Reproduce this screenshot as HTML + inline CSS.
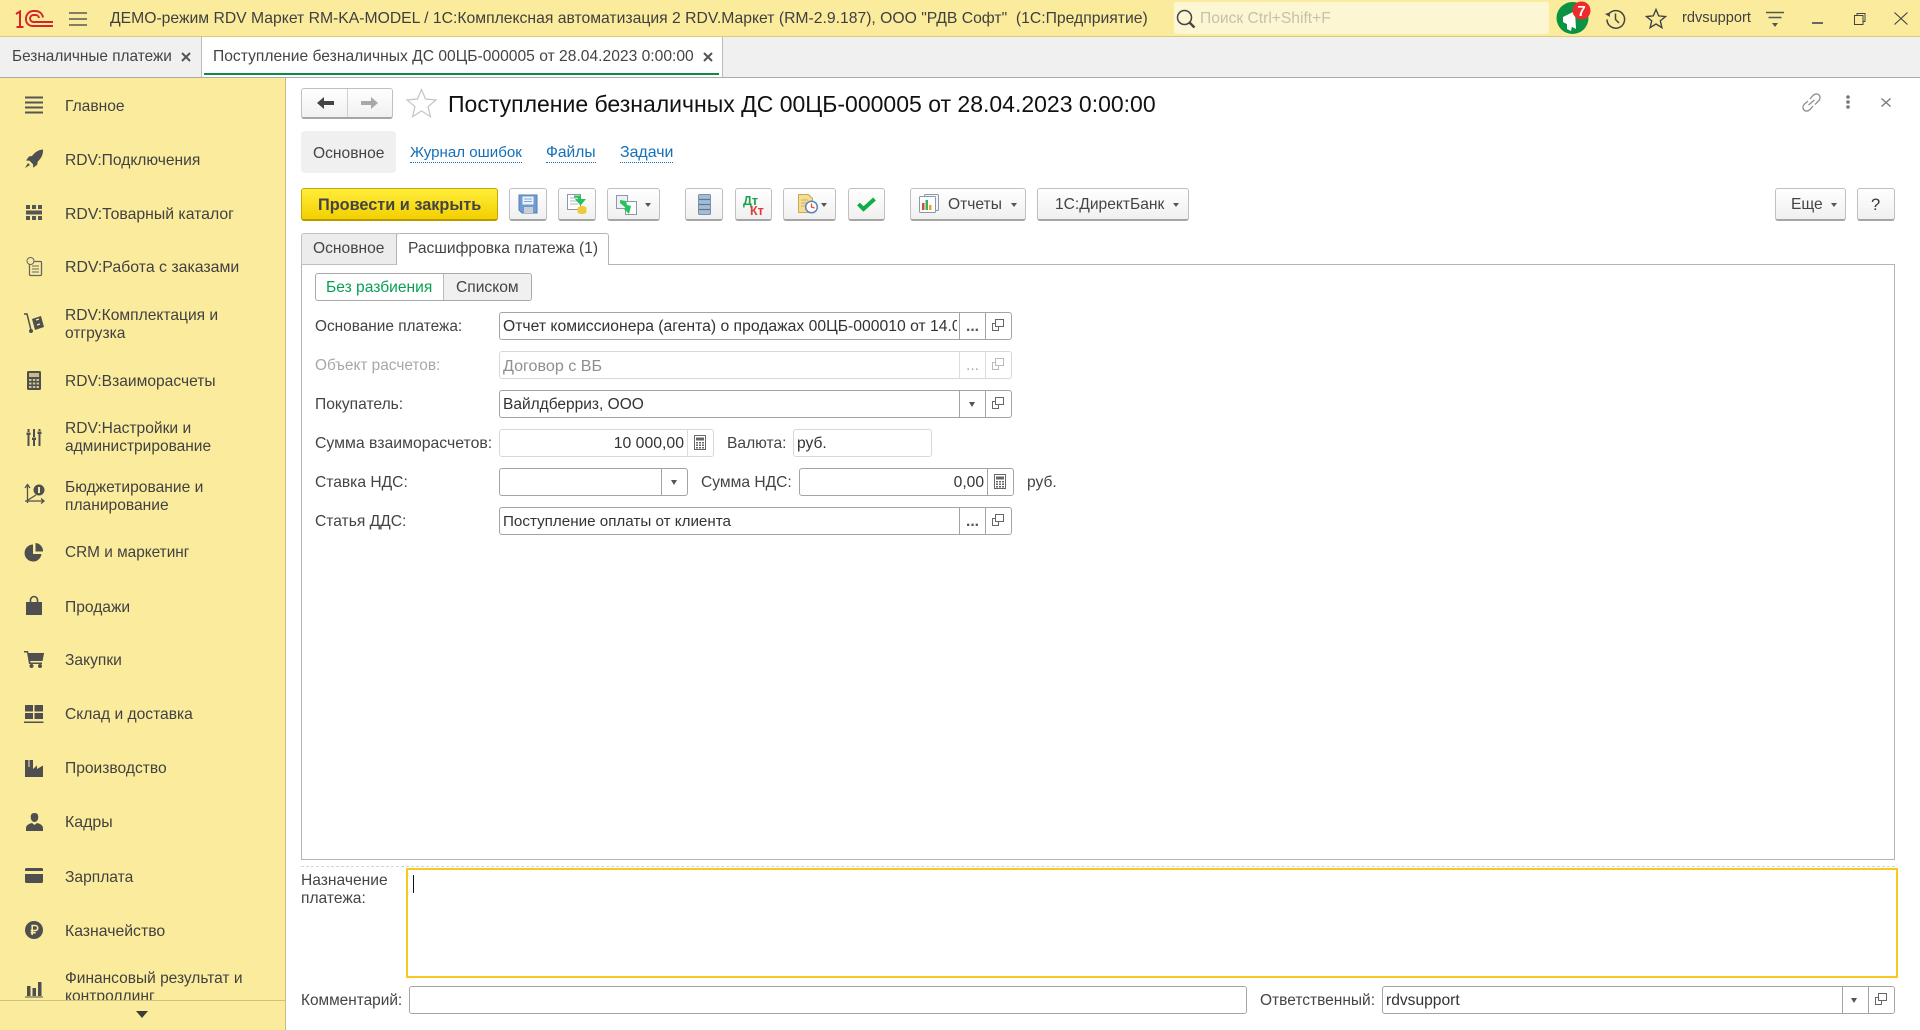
<!DOCTYPE html>
<html lang="ru"><head><meta charset="utf-8"><title>Поступление безналичных ДС</title>
<style>
html,body{margin:0;padding:0;width:1920px;height:1030px;overflow:hidden;background:#fff}
body{position:relative;font-family:"Liberation Sans",Arial,sans-serif;font-size:15.6px;color:#444}
.a{position:absolute}
.t{position:absolute;white-space:nowrap;line-height:20px;height:20px;margin-top:1px}
.b{position:absolute;top:188px;height:33px;box-sizing:border-box;border:1px solid #c0c0c0;border-bottom:2px solid #a5a5a5;border-radius:3px;background:linear-gradient(#fff,#f0f0f0)}
.f{position:absolute;box-sizing:border-box;height:28px;border:1px solid #a4a4a4;border-radius:3px;background:#fff}
.g{border-color:#d8d8d8}
.d{position:absolute;width:1px;top:313px;height:26px;background:#a4a4a4}
svg{position:absolute;overflow:visible}
.m{color:#414141}
.l{color:#1470b8;border-bottom:1px dotted #1470b8;height:18px;line-height:18px}
</style></head><body>
<svg width="0" height="0" style="position:absolute"><defs>
<symbol id="cp" viewBox="0 0 14 14"><path d="M4.500 1.500h8v7h-8zM4.500 5.500H1.500v7h6v-4" fill="none" stroke="#666" stroke-width="1"/></symbol>
<symbol id="cp2" viewBox="0 0 14 14"><path d="M4.500 1.500h8v7h-8zM4.500 5.500H1.500v7h6v-4" fill="none" stroke="#bbb" stroke-width="1"/></symbol>
<symbol id="calc" viewBox="0 0 14 16"><rect x="1.500" y=".5" width="11" height="14" fill="#fff" stroke="#666"/><rect x="3" y="2.500" width="8" height="3" fill="#666"/><path d="M3 7h2v1.500H3zM6 7h2v1.500H6zM9 7h2v1.500H9zM3 9.500h2V11H3zM6 9.500h2V11H6zM9 9.500h2V11H9zM3 12h2v1.500H3zM6 12h2v1.500H6zM9 12h2v1.500H9z" fill="#666"/></symbol>
</defs></svg>

<!-- title bar -->
<div class="a" style="left:0;top:0;width:1920px;height:37px;background:#fbec9d;border-bottom:1px solid #d9ca7e;box-sizing:border-box"></div>
<svg style="left:15px;top:9px" width="38" height="19" viewBox="0 0 38 19"><path d="M1 5l4-2.500V18M1.500 18h7" fill="none" stroke="#d8232a" stroke-width="2"/><path d="M11 9.500a7.500 7.500 0 0 1 7.500-7.500h2a7.500 7.500 0 0 1 7.500 6.500M11 9.500v1a6.500 6.500 0 0 0 6.500 6.500H38M15 9.500a3.500 3.500 0 0 1 3.500-3.500h2a3.500 3.500 0 0 1 3.500 3M15 9.500v0a3.500 3.500 0 0 0 3.500 3.500H38" fill="none" stroke="#d8232a" stroke-width="1.900"/></svg>
<svg style="left:69px;top:12px" width="20" height="15"><path d="M0 1h18M0 7h18M0 13h18" stroke="#5a5a50" stroke-width="1.400"/></svg>
<div class="t" style="left:110px;top:8px;color:#3f3f3f;font-size:15.73px">ДЕМО-режим RDV Маркет RM-KA-MODEL / 1С:Комплексная автоматизация 2 RDV.Маркет (RM-2.9.187), ООО "РДВ Софт"&nbsp; (1С:Предприятие)</div>
<div class="a" style="left:1174px;top:2px;width:375px;height:32px;background:#fdf6d3;border-radius:3px"></div>
<svg style="left:1176px;top:9px" width="21" height="20"><circle cx="8.500" cy="8.500" r="7" fill="none" stroke="#444" stroke-width="1.500"/><path d="M13.500 13.500l5 5" stroke="#444" stroke-width="2.400"/></svg>
<div class="t" style="left:1200px;top:8px;color:#c4c1ad;font-size:15.6px">Поиск Ctrl+Shift+F</div>
<svg style="left:1556px;top:1px" width="36" height="34"><circle cx="16.500" cy="17" r="16" fill="#0a9345"/><path d="M7 16L19 10l1 18L7 21zM11 23l5 2-1 5-4-2z" fill="#fff"/><circle cx="25.500" cy="9.500" r="9" fill="#ee2a2a"/><text x="25.500" y="15" text-anchor="middle" font-family="Liberation Sans" font-weight="bold" font-size="15" fill="#fff">7</text></svg>
<svg style="left:1605px;top:9px" width="21" height="20"><path d="M3.200 6A8.800 8.800 0 1 1 2 10.500" fill="none" stroke="#444" stroke-width="1.500"/><path d="M0 5l4.500-1.500L5 8z" fill="#444"/><path d="M10.500 4.500v6l3.500 3.500" fill="none" stroke="#444" stroke-width="1.500"/></svg>
<svg style="left:1645px;top:8px" width="22" height="21"><path d="M11 1.500l2.700 6.400 6.800.6-5.200 4.400 1.600 6.700L11 16l-5.900 3.600 1.600-6.700L1.500 8.500l6.800-.6z" fill="none" stroke="#444" stroke-width="1.400"/></svg>
<div class="t" style="left:1682px;top:7px;color:#3f3f3f;font-size:14.600px">rdvsupport</div>
<svg style="left:1766px;top:11px" width="19" height="17"><path d="M0 1.500h18M2.500 6.500h13" stroke="#555" stroke-width="1.400"/><path d="M6 12h6l-3 4z" fill="#555"/></svg>
<div class="a" style="left:1812px;top:22px;width:11px;height:2px;background:#666"></div>
<svg style="left:1854px;top:13px" width="12" height="12"><path d="M3 2.500V.5h8v8H9M.5 2.500h8.500v9H.5z" fill="none" stroke="#444" stroke-width="1"/></svg>
<svg style="left:1894px;top:12px" width="14" height="13"><path d="M.5.5l13 12M13.500.5l-13 12" stroke="#444" stroke-width="1.100"/></svg>

<!-- open tabs -->
<div class="a" style="left:0;top:37px;width:1920px;height:41px;background:#f0f0f0;border-bottom:1px solid #aaa;box-sizing:border-box"></div>
<div class="t" style="left:12px;top:46px;font-size:15.37px">Безналичные платежи</div>
<svg style="left:181px;top:52px" width="10" height="10"><path d="M1 1l8 8M9 1l-8 8" stroke="#555" stroke-width="2"/></svg>
<div class="a" style="left:201px;top:37px;width:522px;height:41px;box-sizing:border-box;background:#fff;border-left:1px solid #bbb;border-right:1px solid #bbb;border-bottom:1px solid #aaa"></div>
<div class="a" style="left:204px;top:73px;width:515px;height:2px;background:#0c8a46"></div>
<div class="t" style="left:213px;top:46px;font-size:15.63px">Поступление безналичных ДС 00ЦБ-000005 от 28.04.2023 0:00:00</div>
<svg style="left:703px;top:52px" width="10" height="10"><path d="M1 1l8 8M9 1l-8 8" stroke="#555" stroke-width="2"/></svg>

<!-- sidebar -->
<div class="a" style="left:0;top:78px;width:286px;height:952px;background:#fbec9d;border-right:1px solid #c9bc7c;box-sizing:border-box;overflow:hidden">
<div class="t m" style="left:65px;top:18px">Главное</div>
<div class="t m" style="left:65px;top:72px">RDV:Подключения</div>
<div class="t m" style="left:65px;top:126px;font-size:15.8px">RDV:Товарный каталог</div>
<div class="t m" style="left:65px;top:179px;font-size:15.87px">RDV:Работа с заказами</div>
<div class="t m" style="left:65px;top:228px;line-height:18px">RDV:Комплектация и</div>
<div class="t m" style="left:65px;top:246px;line-height:18px">отгрузка</div>
<div class="t m" style="left:65px;top:293px">RDV:Взаиморасчеты</div>
<div class="t m" style="left:65px;top:341px;line-height:18px">RDV:Настройки и</div>
<div class="t m" style="left:65px;top:359px;line-height:18px;font-size:15.5px">администрирование</div>
<div class="t m" style="left:65px;top:400px;line-height:18px">Бюджетирование и</div>
<div class="t m" style="left:65px;top:418px;line-height:18px">планирование</div>
<div class="t m" style="left:65px;top:464px;font-size:15.37px">CRM и маркетинг</div>
<div class="t m" style="left:65px;top:519px">Продажи</div>
<div class="t m" style="left:65px;top:572px">Закупки</div>
<div class="t m" style="left:65px;top:626px">Склад и доставка</div>
<div class="t m" style="left:65px;top:680px">Производство</div>
<div class="t m" style="left:65px;top:734px;font-size:15.9px">Кадры</div>
<div class="t m" style="left:65px;top:789px">Зарплата</div>
<div class="t m" style="left:65px;top:843px;font-size:15.8px">Казначейство</div>
<div class="t m" style="left:65px;top:891px;line-height:18px;font-size:15.5px">Финансовый результат и</div>
<div class="t m" style="left:65px;top:909px;line-height:18px">контроллинг</div>
<div class="a" style="left:0;top:922px;width:285px;height:30px;background:#fbec9d;border-top:1px solid #cfc27f;box-sizing:border-box"></div>
<div class="a" style="left:136px;top:933px;width:0;height:0;border-left:6px solid transparent;border-right:6px solid transparent;border-top:7px solid #3c3c3c"></div>
</div>
<!-- sidebar icons -->
<svg style="left:25px;top:96px" width="19" height="19"><path d="M0 1.500h18M0 6.500h18M0 11.500h18M0 16.500h18" stroke="#555" stroke-width="2"/></svg>
<svg style="left:24px;top:149px" width="20" height="20"><path d="M19 .5c-5 .5-8 2.500-11 6.500l-3 .5-3 4 3.500.2 3.500 3.500.2 3.500 4-3 .5-3c3.500-3.500 5.500-7 5.300-12z" fill="#4f4f4f"/><path d="M1 19l3-5 2 2z" fill="#4f4f4f"/></svg>
<svg style="left:26px;top:205px" width="17" height="16"><path d="M0 0h4v4H0zM6 0h4v4H6zM12 0h4v4h-4zM0 5.500h16v4H0zM0 11h4v4H0zM6 11h4v4H6zM12 11h4v4h-4z" fill="#555"/></svg>
<svg style="left:26px;top:257px" width="17" height="20"><rect x="3.500" y="4.500" width="12" height="14" rx="1" fill="none" stroke="#666" stroke-width="1.300"/><path d="M6 9h7M6 12h7M6 15h7" stroke="#666"/><circle cx="4.500" cy="4" r="3.500" fill="#fbec9d" stroke="#666"/></svg>
<svg style="left:24px;top:312px" width="21" height="22"><path d="M0 2h3l4 16" fill="none" stroke="#4f4f4f" stroke-width="1.500"/><circle cx="7" cy="19" r="2" fill="#4f4f4f"/><path d="M8 7l9-3 3 11-9 3z" fill="#4f4f4f"/><path d="M12 8l3-1M13 13l3-1" stroke="#fbec9d" stroke-width="1.400"/></svg>
<svg style="left:27px;top:371px" width="15" height="20"><rect width="14" height="19" rx="1.500" fill="#4f4f4f"/><rect x="2" y="2" width="10" height="4" fill="#fbec9d" opacity=".7"/><path d="M2 8h2.500v2H2zM5.800 8h2.500v2H5.800zM9.500 8H12v2H9.500zM2 11.500h2.500v2H2zM5.800 11.500h2.500v2H5.800zM9.500 11.500H12v2H9.500zM2 15h2.500v2H2zM5.800 15h2.500v2H5.800zM9.500 15H12v2H9.500z" fill="#fbec9d" opacity=".75"/></svg>
<svg style="left:26px;top:429px" width="17" height="17"><path d="M2.500 0v3M2.500 6v11M8 0v8M8 11v6M13.500 0v2M13.500 5v12" stroke="#4f4f4f" stroke-width="2"/><path d="M.5 3.500h4v2.500h-4zM6 8.500h4V11H6zM11.500 2.500h4V5h-4z" fill="#4f4f4f"/></svg>
<svg style="left:24px;top:484px" width="21" height="22"><path d="M3.500 19V2M1 4l2.500-3.500L6 4M1 17h18M17 14.500l3 2.500-3 2.500" fill="none" stroke="#505050" stroke-width="1.300"/><path d="M4 16l8-5" stroke="#505050" stroke-width="1.300"/><circle cx="15" cy="6" r="5.500" fill="#505050"/><rect x="14" y="3" width="2" height="6" fill="#fbec9d"/></svg>
<svg style="left:25px;top:543px" width="19" height="19"><path d="M8 1.500a8.500 8.500 0 1 0 8.500 9.500H8z" fill="#4f4f4f"/><path d="M10.500 0a8 8 0 0 1 7.500 8.500h-7.500z" fill="#4f4f4f"/></svg>
<svg style="left:26px;top:596px" width="17" height="19"><path d="M0 6h16v13H0z" fill="#4f4f4f"/><path d="M4.500 8V4a3.500 3.500 0 0 1 7 0v4" fill="none" stroke="#4f4f4f" stroke-width="1.600"/></svg>
<svg style="left:24px;top:650px" width="21" height="18"><path d="M0 1h4l.5 2H20l-1.500 7H6l.5 2.500H18V14H5L3 2.500H0z" fill="#4f4f4f"/><path d="M4 3h16l-1.500 8H5.500z" fill="#4f4f4f"/><circle cx="7.500" cy="16" r="2" fill="#4f4f4f"/><circle cx="16" cy="16" r="2" fill="#4f4f4f"/></svg>
<svg style="left:25px;top:705px" width="19" height="19"><path d="M0 0h8v6.500H0zM9.500 0H18v6.500H9.500zM0 8h8v6H0zM9.500 8H18v6H9.500zM-1 16.500h19.500V18H-1z" fill="#4f4f4f"/></svg>
<svg style="left:25px;top:759px" width="19" height="19"><path d="M0 18V1h3.500v7h1V1H8v9l4-3.500V10l6-3.500V18z" fill="#4f4f4f"/></svg>
<svg style="left:26px;top:813px" width="17" height="19"><path d="M8.500 0C5 0 4.500 2.500 4.800 5c.3 2 1.400 4 3.700 4s3.400-2 3.700-4C12.500 2.500 12 0 8.500 0zM0 18v-3c0-3 3.500-4.500 6-5l2.500 2 2.500-2c2.500.5 6 2 6 5v3z" fill="#4f4f4f"/></svg>
<svg style="left:25px;top:868px" width="18" height="15"><path d="M1.500 0h15A1.500 1.500 0 0 1 18 1.500V3H0V1.500A1.500 1.500 0 0 1 1.500 0zM0 6h18v7.500a1.500 1.500 0 0 1-1.500 1.500h-15A1.500 1.500 0 0 1 0 13.500z" fill="#4f4f4f"/></svg>
<svg style="left:25px;top:921px" width="19" height="19"><circle cx="9" cy="9" r="9" fill="#4f4f4f"/><path d="M7.200 14V4.500h3a2.500 2.500 0 0 1 0 5h-4.500M5.700 11.700h5" fill="none" stroke="#fbec9d" stroke-width="1.600"/></svg>
<svg style="left:25px;top:979px" width="19" height="19"><path d="M2 7h3.500v10H2zM7.500 9H11v8H7.500zM13 3h3.500v14H13z" fill="#4f4f4f"/><path d="M0 18h18" stroke="#4f4f4f"/></svg>

<!-- header -->
<div class="b" style="left:301px;top:88px;width:92px;height:31px"></div>
<div class="a" style="left:347px;top:89px;width:1px;height:28px;background:#d0d0d0"></div>
<svg style="left:317px;top:96px" width="18" height="14"><path d="M0 7l7-6v4h10v4H7v4z" fill="#444"/></svg>
<svg style="left:360px;top:96px" width="18" height="14"><path d="M18 7l-7-6v4H1v4h10v4z" fill="#a8a8a8"/></svg>
<svg style="left:406px;top:88px" width="31" height="30"><path d="M15.500 1.500l4 9.500 10.500 1-8 6.700 2.500 10L15.500 23l-9 5.700 2.500-10L1 12l10.500-1z" fill="#fff" stroke="#c4c4c4" stroke-width="1.200"/></svg>
<div class="t" style="left:448px;top:89px;height:28px;line-height:28px;font-size:23px;color:#111">Поступление безналичных ДС 00ЦБ-000005 от 28.04.2023 0:00:00</div>
<svg style="left:1801px;top:93px" width="21" height="19"><path d="M9 6l3-3.500c2-2 4.500-2 6 -.5s1.500 4-.5 6L14 11.500M12 13l-3 3.500c-2 2-4.500 2-6 .5s-1.500-4 .5-6L7 8M7.500 12L13.500 7" fill="none" stroke="#8f8f8f" stroke-width="1.300"/></svg>
<svg style="left:1846px;top:95px" width="4" height="14"><circle cx="2" cy="2" r="1.800" fill="#777"/><circle cx="2" cy="7" r="1.800" fill="#777"/><circle cx="2" cy="12" r="1.800" fill="#777"/></svg>
<svg style="left:1881px;top:98px" width="10" height="9"><path d="M.5.5l9 8M9.500.5l-9 8" stroke="#777" stroke-width="1.300"/></svg>

<!-- section links -->
<div class="a" style="left:301px;top:131px;width:95px;height:42px;background:#f0f0f0;border-radius:4px"></div>
<div class="t" style="left:313px;top:143px">Основное</div>
<div class="t l" style="left:410px;top:143px;font-size:15.1px">Журнал ошибок</div>
<div class="t l" style="left:546px;top:143px">Файлы</div>
<div class="t l" style="left:620px;top:143px;font-size:15.9px">Задачи</div>

<!-- toolbar -->
<div class="a" style="left:301px;top:188px;width:197px;height:33px;box-sizing:border-box;border:1px solid #c8a800;border-bottom:2px solid #b89a00;border-radius:3px;background:linear-gradient(#ffee3a,#f3d000)"></div>
<div class="t" style="left:318px;top:194px;font-weight:bold;color:#444;font-size:16.3px">Провести и закрыть</div>
<div class="b" style="left:509px;width:38px"></div>
<svg style="left:519px;top:195px" width="19" height="19"><path d="M0 0h18v18H3l-3-3z" fill="#6f9bd0" stroke="#5480b4"/><rect x="3.500" y="1.500" width="11" height="8" fill="#eef4fb"/><path d="M5 4h8M5 6.500h8" stroke="#7da4d4"/><rect x="5" y="12" width="9" height="6" fill="#c9cfd6"/></svg>
<div class="b" style="left:558px;width:38px"></div>
<svg style="left:567px;top:194px" width="22" height="21"><rect x=".5" y=".5" width="13" height="15" fill="#fff" stroke="#8a98a8"/><path d="M3 4h8M3 7h8M3 10h8" stroke="#a9b4bf"/><path d="M7 1.500h7v3.500h5l-5.500 6.500L8 5h3V3.500H7z" fill="#24c15c"/><ellipse cx="15" cy="14" rx="4.500" ry="2" fill="#f0c93a"/><path d="M10.500 14v4c0 1 2 2 4.500 2s4.500-1 4.500-2v-4" fill="#f0c93a"/></svg>
<div class="b" style="left:607px;width:53px"></div>
<svg style="left:616px;top:195px" width="24" height="20"><rect x=".5" y=".5" width="11" height="13" fill="#eef1f4" stroke="#8a98a8"/><rect x="9.500" y="6.500" width="11" height="13" fill="#fff" stroke="#8a98a8"/><path d="M4 5l6 1 1 4 4 1-2 8-5-5 2-1-6-5z" fill="#22c45c"/></svg>
<div class="a" style="left:645px;top:203px;width:0;height:0;border-left:3px solid transparent;border-right:3px solid transparent;border-top:4px solid #555"></div>
<div class="b" style="left:685px;width:38px"></div>
<svg style="left:698px;top:194px" width="13" height="21"><path d="M1.500.5h10a1 1 0 0 1 1 1v18a1 1 0 0 1-1 1h-10a1 1 0 0 1-1-1v-18a1 1 0 0 1 1-1z" fill="#a4bdd6" stroke="#7b8fa5"/><path d="M1 5.500h11M1 10.500h11M1 15.500h11" stroke="#5f7590" stroke-width="1.200"/></svg>
<div class="b" style="left:735px;width:37px"></div>
<div class="t" style="left:743px;top:193px;height:14px;line-height:14px;font-size:12.5px;font-weight:bold;color:#1aa24f">Дт</div>
<div class="t" style="left:750px;top:203px;height:14px;line-height:14px;font-size:12.5px;font-weight:bold;color:#e03a3a">Кт</div>
<div class="b" style="left:783px;width:53px"></div>
<svg style="left:798px;top:194px" width="21" height="20"><path d="M.5.500h10l4 4v14H.5z" fill="#f6dd94" stroke="#caa84f"/><path d="M3 6h7M3 9h7M3 12h5" stroke="#d4b15f"/><circle cx="13.500" cy="13" r="5.800" fill="#fff" stroke="#5a83b6" stroke-width="1.500"/><path d="M13.500 9.500V13l3 1" fill="none" stroke="#e04b3f" stroke-width="1.300"/></svg>
<div class="a" style="left:821px;top:203px;width:0;height:0;border-left:3px solid transparent;border-right:3px solid transparent;border-top:4px solid #555"></div>
<div class="b" style="left:848px;width:37px"></div>
<svg style="left:857px;top:197px" width="19" height="14"><path d="M1.500 7l5 5L17.500 2" fill="none" stroke="#0fae45" stroke-width="4"/></svg>
<div class="b" style="left:910px;width:116px"></div>
<svg style="left:919px;top:194px" width="21" height="20"><rect x="5.500" y=".5" width="14" height="16" rx="1" fill="#f4f6f8" stroke="#8a98a8"/><rect x=".5" y="2.500" width="16" height="16" rx="1" fill="#fff" stroke="#8a98a8"/><rect x="3" y="9" width="2.500" height="7" fill="#d84a3b"/><rect x="6.500" y="6" width="2.500" height="10" fill="#38b35a"/><rect x="10" y="11" width="2.500" height="5" fill="#e0a82e"/></svg>
<div class="t" style="left:948px;top:194px">Отчеты</div>
<div class="a" style="left:1011px;top:203px;width:0;height:0;border-left:3px solid transparent;border-right:3px solid transparent;border-top:4px solid #555"></div>
<div class="b" style="left:1037px;width:152px"></div>
<div class="t" style="left:1055px;top:194px">1С:ДиректБанк</div>
<div class="a" style="left:1173px;top:203px;width:0;height:0;border-left:3px solid transparent;border-right:3px solid transparent;border-top:4px solid #555"></div>
<div class="b" style="left:1775px;width:71px"></div>
<div class="t" style="left:1791px;top:194px">Еще</div>
<div class="a" style="left:1831px;top:203px;width:0;height:0;border-left:3px solid transparent;border-right:3px solid transparent;border-top:4px solid #555"></div>
<div class="b" style="left:1857px;width:38px"></div>
<div class="t" style="left:1871px;top:194px;color:#333;font-size:16.5px">?</div>

<!-- form tabs -->
<div class="a" style="left:301px;top:264px;width:1594px;height:596px;box-sizing:border-box;border:1px solid #b4b4b4"></div>
<div class="a" style="left:301px;top:233px;width:96px;height:32px;box-sizing:border-box;background:#ececec;border:1px solid #c0c0c0;border-radius:3px 0 0 0"></div>
<div class="t" style="left:313px;top:238px">Основное</div>
<div class="a" style="left:396px;top:233px;width:213px;height:32px;box-sizing:border-box;background:#fff;border:1px solid #b4b4b4;border-bottom:none;border-radius:3px 3px 0 0"></div>
<div class="t" style="left:408px;top:238px">Расшифровка платежа (1)</div>

<!-- radio -->
<div class="a" style="left:315px;top:273px;width:217px;height:28px;box-sizing:border-box;border:1px solid #a9a9a9;border-radius:3px;background:#fff"></div>
<div class="a" style="left:443px;top:274px;width:88px;height:26px;background:#f0f0f0;border-left:1px solid #bbb;border-radius:0 3px 3px 0;box-sizing:border-box"></div>
<div class="t" style="left:326px;top:277px;color:#07a053">Без разбиения</div>
<div class="t" style="left:456px;top:277px">Списком</div>

<!-- fields -->
<div class="t" style="left:315px;top:316px;font-size:15.4px">Основание платежа:</div>
<div class="f" style="left:499px;top:312px;width:513px"></div>
<div class="d" style="left:959px"></div><div class="d" style="left:985px"></div>
<div class="a" style="left:503px;top:317px;width:454px;height:20px;overflow:hidden;white-space:nowrap;line-height:20px;color:#333;font-size:15.72px">Отчет комиссионера (агента) о продажах 00ЦБ-000010 от 14.04.2023</div>
<div class="t" style="left:966px;top:316px;font-weight:bold;color:#555">...</div>
<svg style="left:991px;top:318px" width="14" height="14"><use href="#cp"/></svg>

<div class="t" style="left:315px;top:355px;color:#a8a8a8;font-size:15.4px">Объект расчетов:</div>
<div class="f g" style="left:499px;top:351px;width:513px"></div>
<div class="d" style="left:959px;top:352px;background:#dcdcdc"></div><div class="d" style="left:985px;top:352px;background:#dcdcdc"></div>
<div class="t" style="left:503px;top:355px;color:#8f8f8f;font-size:16.1px">Договор с ВБ</div>
<div class="t" style="left:966px;top:355px;color:#aaa">...</div>
<svg style="left:991px;top:357px" width="14" height="14"><use href="#cp2"/></svg>

<div class="t" style="left:315px;top:394px">Покупатель:</div>
<div class="f" style="left:499px;top:390px;width:513px"></div>
<div class="d" style="left:959px;top:391px"></div><div class="d" style="left:985px;top:391px"></div>
<div class="t" style="left:503px;top:394px;color:#333;font-size:15.5px">Вайлдберриз, ООО</div>
<div class="a" style="left:969px;top:402px;width:0;height:0;border-left:3.500px solid transparent;border-right:3.500px solid transparent;border-top:5px solid #555"></div>
<svg style="left:991px;top:396px" width="14" height="14"><use href="#cp"/></svg>

<div class="t" style="left:315px;top:433px;font-size:15.8px">Сумма взаиморасчетов:</div>
<div class="f g" style="left:499px;top:429px;width:215px"></div>
<div class="d" style="left:687px;top:430px;background:#ddd"></div>
<div class="t" style="left:500px;top:433px;width:184px;text-align:right;color:#333;font-size:15.8px">10 000,00</div>
<svg style="left:693px;top:435px" width="14" height="16"><use href="#calc"/></svg>
<div class="t" style="left:727px;top:433px">Валюта:</div>
<div class="f g" style="left:793px;top:429px;width:139px"></div>
<div class="t" style="left:797px;top:433px;color:#333">руб.</div>

<div class="t" style="left:315px;top:472px">Ставка НДС:</div>
<div class="f" style="left:499px;top:468px;width:189px"></div>
<div class="d" style="left:661px;top:469px"></div>
<div class="a" style="left:671px;top:480px;width:0;height:0;border-left:3.500px solid transparent;border-right:3.500px solid transparent;border-top:5px solid #555"></div>
<div class="t" style="left:701px;top:472px">Сумма НДС:</div>
<div class="f" style="left:799px;top:468px;width:215px"></div>
<div class="d" style="left:987px;top:469px"></div>
<div class="t" style="left:800px;top:472px;width:184px;text-align:right;color:#333">0,00</div>
<svg style="left:993px;top:474px" width="14" height="16"><use href="#calc"/></svg>
<div class="t" style="left:1027px;top:472px">руб.</div>

<div class="t" style="left:315px;top:511px">Статья ДДС:</div>
<div class="f" style="left:499px;top:507px;width:513px"></div>
<div class="d" style="left:959px;top:508px"></div><div class="d" style="left:985px;top:508px"></div>
<div class="t" style="left:503px;top:511px;color:#333;font-size:15.2px">Поступление оплаты от клиента</div>
<div class="t" style="left:966px;top:511px;font-weight:bold;color:#555">...</div>
<svg style="left:991px;top:513px" width="14" height="14"><use href="#cp"/></svg>

<!-- bottom -->
<div class="a" style="left:301px;top:866px;width:1594px;height:0;border-top:1px dashed #d4d4d4"></div>
<div class="t" style="left:301px;top:871px;line-height:18px">Назначение</div>
<div class="t" style="left:301px;top:889px;line-height:18px">платежа:</div>
<div class="a" style="left:406px;top:868px;height:110px;width:1492px;box-sizing:border-box;border:2px solid #fbc81e;background:#fff"></div>
<div class="a" style="left:413px;top:875px;width:1px;height:18px;background:#111"></div>
<div class="t" style="left:301px;top:990px;font-size:15.4px">Комментарий:</div>
<div class="f" style="left:409px;top:986px;width:838px"></div>
<div class="t" style="left:1260px;top:990px;font-size:15.5px">Ответственный:</div>
<div class="f" style="left:1382px;top:986px;width:513px"></div>
<div class="d" style="left:1842px;top:987px"></div><div class="d" style="left:1868px;top:987px"></div>
<div class="t" style="left:1386px;top:990px;color:#333">rdvsupport</div>
<div class="a" style="left:1851px;top:998px;width:0;height:0;border-left:3.500px solid transparent;border-right:3.500px solid transparent;border-top:5px solid #555"></div>
<svg style="left:1874px;top:992px" width="14" height="14"><use href="#cp"/></svg>
</body></html>
